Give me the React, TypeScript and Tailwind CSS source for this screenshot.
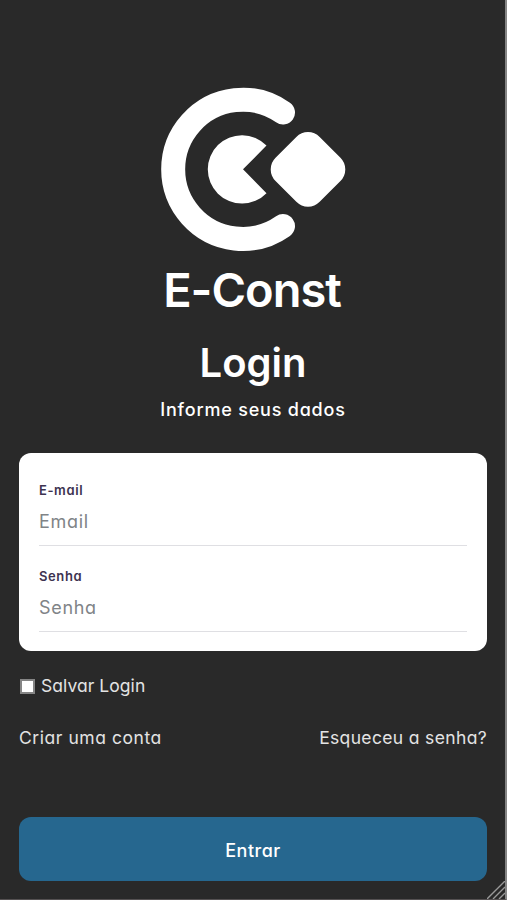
import type { ReactNode } from 'react';

const Logo = () => (
  <svg className="block h-[164px] w-[184px] overflow-visible" viewBox="161 87 184 164" fill="none">
    <path d="M283 112.5A69.6 69.6 0 1 0 283 226.1" stroke="white" strokeWidth="24" strokeLinecap="round" />
    <path d="M243 169.3L266.5 145.5A34.2 34.2 0 1 0 266.5 193.2Z" fill="white" />
    <rect x="276.8" y="138.2" width="62.4" height="62.4" rx="16.5" transform="rotate(45 308 169.4)" fill="white" />
  </svg>
);

type FieldProps = {
  id: string;
  label: string;
  type: string;
  placeholder: string;
};

const Field = ({ id, label, type, placeholder }: FieldProps) => (
  <div className="flex flex-col">
    <label htmlFor={id} className="h-5 text-[13px] leading-5 font-semibold tracking-[0.6px] text-[#3d3350]">
      {label}
    </label>
    <input
      id={id}
      type={type}
      placeholder={placeholder}
      className="h-[46px] w-full border-b border-[#dfdfe3] pb-0.5 text-[18px] tracking-[0.7px] text-gray-800 outline-none placeholder:text-[#808487]"
    />
  </div>
);

const FooterLink = ({ children }: { children: ReactNode }) => (
  <a href="#" className="text-[17.5px] leading-6 text-[#e3e3e3]">
    {children}
  </a>
);

const App = () => {
  return (
    <div className="relative flex h-[900px] w-[507px] flex-col overflow-hidden border-r-2 border-b border-r-[#858585] border-b-[#555152] bg-[#292929] pr-[18px] pl-[19px] font-['Inter',sans-serif] [font-feature-settings:'cv11']">
      {/* Header */}
      <header className="flex flex-col items-center pt-[87px] text-white">
        <Logo />
        <p className="mt-[11px] h-[56px] pr-0.5 text-[47px] leading-[56px] font-semibold tracking-[-1px] whitespace-nowrap">E-Const</p>
        <h1 className="mt-[17px] h-[56px] text-[40px] leading-[56px] font-semibold">Login</h1>
        <p className="mt-[7px] h-6 text-[18px] leading-6 font-medium tracking-[0.8px] whitespace-nowrap">Informe seus dados</p>
      </header>

      <form className="flex flex-col">
        {/* Credentials */}
        <div className="mt-[31px] flex h-[198px] flex-col gap-5 rounded-xl bg-white px-5 pt-[27px]">
          <Field id="email" label="E-mail" type="email" placeholder="Email" />
          <Field id="senha" label="Senha" type="password" placeholder="Senha" />
        </div>

        <label className="mt-[23px] flex h-6 items-center gap-1.5 text-[17.5px] tracking-[0.05px] text-[#e3e3e3]">
          <input type="checkbox" className="ml-px size-[15px] appearance-none border-2 border-[#858585] bg-white checked:bg-[#26678f]" />
          <span className="pt-px whitespace-nowrap">Salvar Login</span>
        </label>

        <div className="mt-[28px] flex h-6 justify-between whitespace-nowrap">
          <span className="tracking-[0.55px]"><FooterLink>Criar uma conta</FooterLink></span>
          <span className="tracking-[0.35px]"><FooterLink>Esqueceu a senha?</FooterLink></span>
        </div>

        <button type="button" className="mt-[67px] h-16 rounded-xl bg-[#26678f] pt-0.5 text-[18px] font-medium tracking-[0.5px] text-white">
          Entrar
        </button>
      </form>

      {/* Resize grip */}
      <svg className="absolute right-0 bottom-0 size-[18px]" viewBox="0 0 18 18" stroke="#999999" strokeWidth="1.4">
        <path d="M0 18L18 0M6 18L18 6M12 18L18 12" />
      </svg>
    </div>
  );
};

export default App;
